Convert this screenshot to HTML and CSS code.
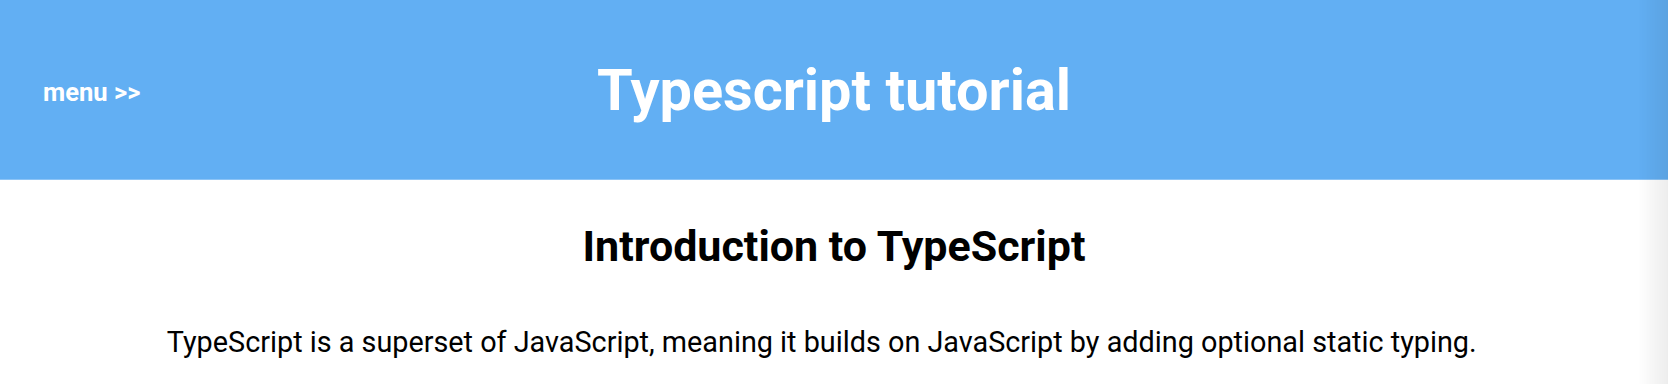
FILE: index.html
```html
<!DOCTYPE html>
<html lang="en">
<head>
<meta charset="utf-8">
<title>Typescript tutorial</title>
<link rel="stylesheet" href="styles.css">
</head>
<body>
<div class="page">
  <header class="topbar">
    <div class="menu-toggle">menu &gt;&gt;</div>
    <h1 class="site-title">Typescript tutorial</h1>
    <div class="spacer"></div>
  </header>
  <main class="content">
    <h2 class="section-title">Introduction to TypeScript</h2>
    <p class="intro">TypeScript is a superset of JavaScript, meaning it builds on JavaScript by adding optional static typing.</p>
  </main>
</div>
<div class="drawer-shadow"></div>
</body>
</html>
```
FILE: styles.css
```css
html, body {
  margin: 0;
  padding: 0;
  background: #ffffff;
  font-family: Roboto, "Noto Sans", Arial, sans-serif;
  overflow: hidden;
}

.topbar {
  display: grid;
  grid-template-columns: 1fr auto 1fr;
  align-items: center;
  height: 180px;
  background: #62aff3;
  border-bottom: 1px solid #8cc4f6;
  box-sizing: border-box;
  color: #ffffff;
}

.menu-toggle {
  padding-left: 43px;
  font-size: 25.6px;
  font-weight: 700;
  padding-top: 5px;
}

.site-title {
  margin: 0;
  font-size: 57.7px;
  font-weight: 700;
  line-height: 1;
  padding-top: 2px;
}

.content {
  padding-top: 38px;
}

.section-title {
  margin: 0;
  text-align: center;
  font-size: 43px;
  font-weight: 700;
  line-height: 56px;
  color: #000;
}

.intro {
  margin: 52px 0 0 0;
  padding-left: 10%;
  font-size: 28.8px;
  line-height: 32px;
  color: #000;
}

.drawer-shadow {
  position: fixed;
  top: 0;
  right: 0;
  width: 30px;
  height: 100%;
  background: linear-gradient(to right, rgba(0, 0, 0, 0), rgba(0, 0, 0, 0.07));
  pointer-events: none;
}
```
